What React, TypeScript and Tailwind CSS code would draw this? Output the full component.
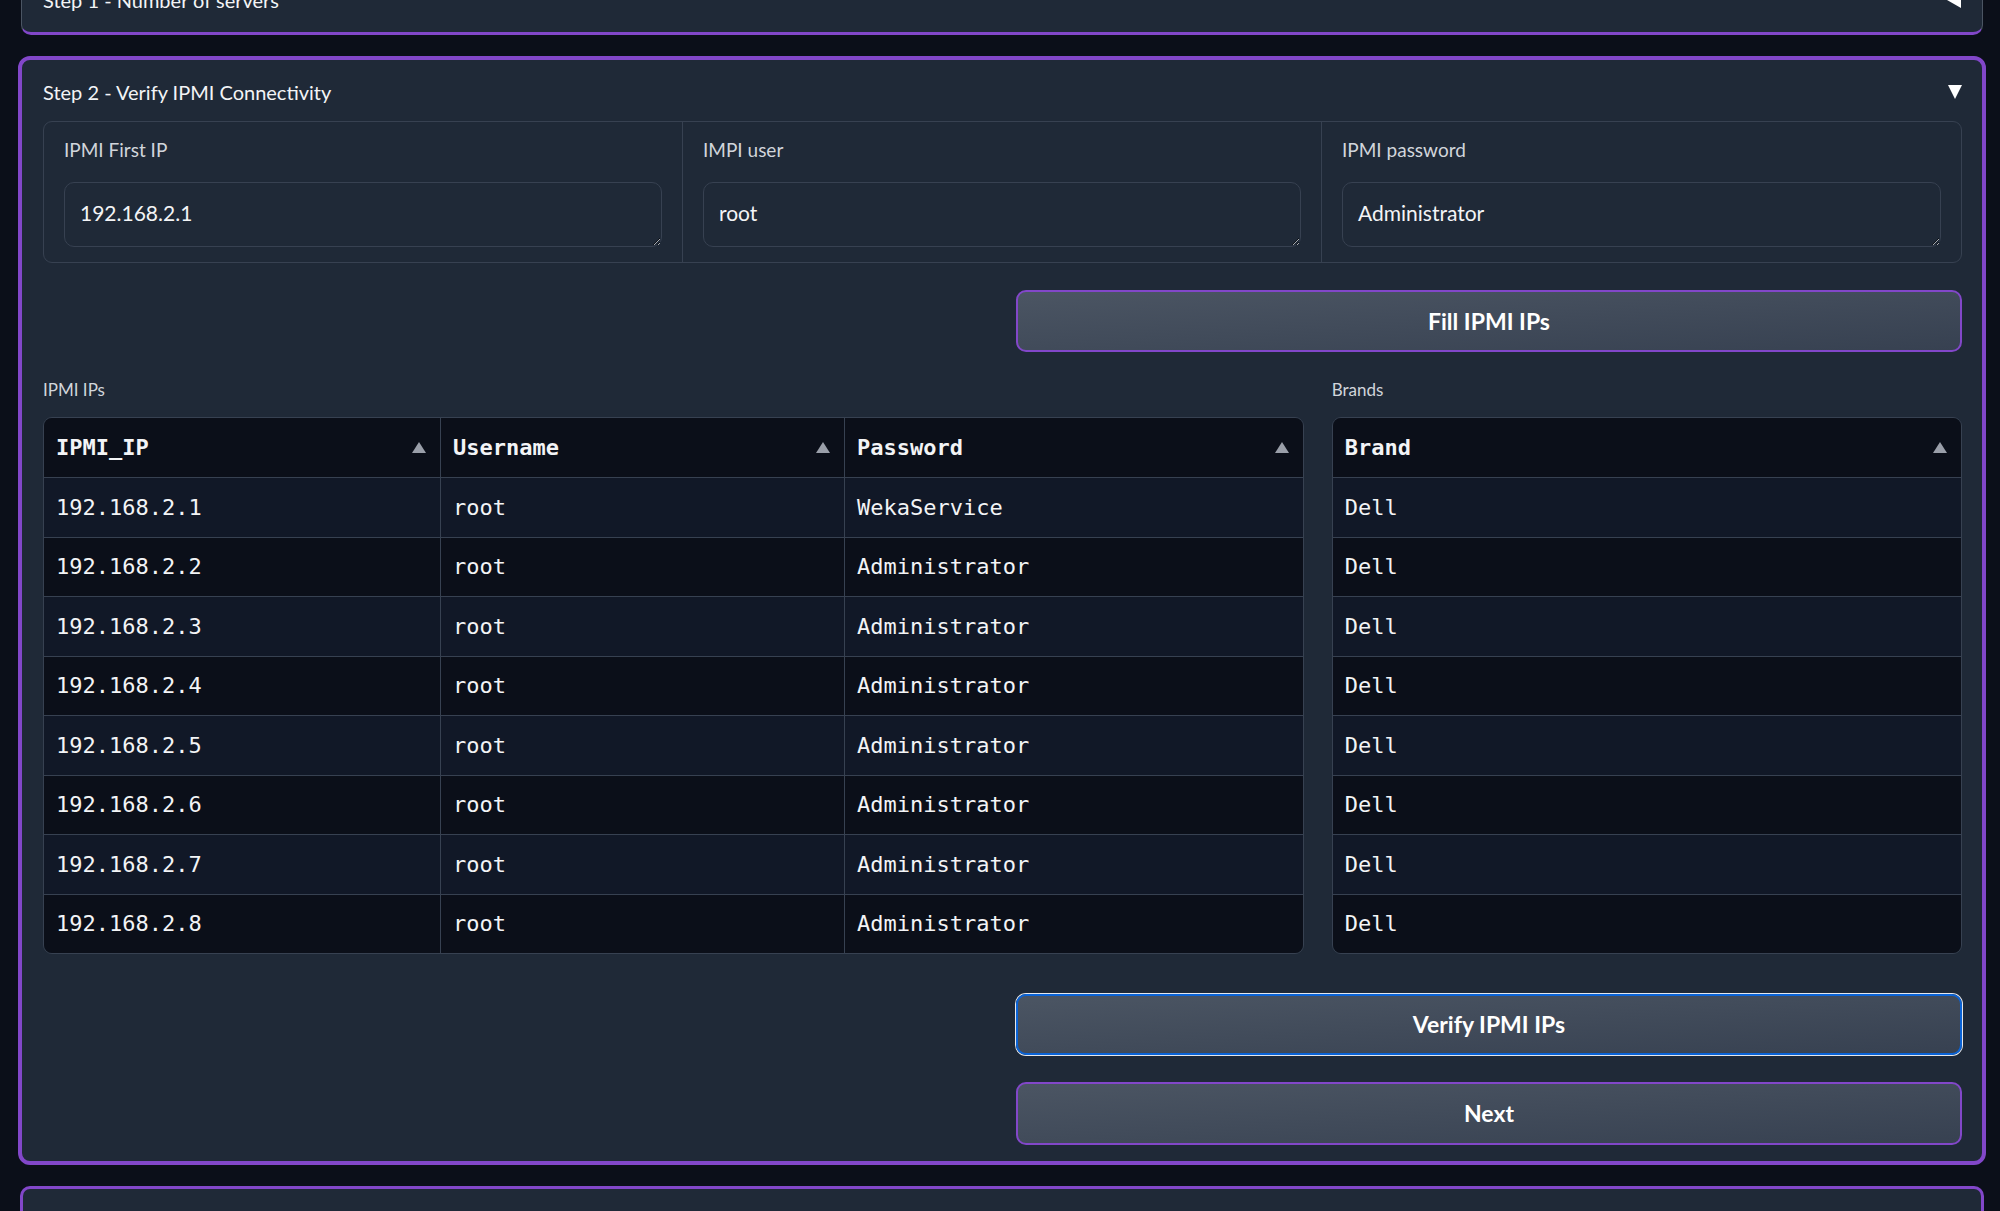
const ipRows = [
  ["192.168.2.1", "root", "WekaService"],
  ["192.168.2.2", "root", "Administrator"],
  ["192.168.2.3", "root", "Administrator"],
  ["192.168.2.4", "root", "Administrator"],
  ["192.168.2.5", "root", "Administrator"],
  ["192.168.2.6", "root", "Administrator"],
  ["192.168.2.7", "root", "Administrator"],
  ["192.168.2.8", "root", "Administrator"],
];

const fields = [
  { label: "IPMI First IP", value: "192.168.2.1" },
  { label: "IMPI user", value: "root" },
  { label: "IPMI password", value: "Administrator" },
];

const SortArrow = () => (
  <svg width="14" height="11" viewBox="0 0 14 11" className="shrink-0">
    <polygon points="7,0 14,11 0,11" fill="#9a9fa9" />
  </svg>
);

const HeaderCell = ({ title, last }: { title: string; last?: boolean }) => (
  <div
    className={`flex h-[59px] items-center justify-between pl-[12px] pr-[14px] font-bold ${
      last ? "" : "border-r border-[#374151]"
    }`}
  >
    <span>{title}</span>
    <SortArrow />
  </div>
);

const Cell = ({ text, last }: { text: string; last?: boolean }) => (
  <div className={`flex h-[58.5px] items-center px-[12px] ${last ? "" : "border-r border-[#374151]"}`}>{text}</div>
);

const btn =
  "flex w-full items-center justify-center rounded-[10px] bg-gradient-to-br from-[#4b5563] to-[#374151] text-[23px] font-bold text-white";

export default function App() {
  return (
    <div className="h-[1211px] overflow-hidden bg-[#0b0f19] pl-[18px] pr-[14px] font-['Lato',sans-serif] text-[#e5e7eb]">
      {/* Step 1 - collapsed */}
      <div className="mx-[3px] -mt-[35px] h-[70px] rounded-[10px] border-x border-b-[3px] border-[#4b5563] border-b-[#8247c9] bg-[#1f2937] px-[21px] pt-[20px]">
        <div className="flex h-[30px] items-center justify-between">
          <span className="text-[20px] text-[#f3f4f6]">Step 1 - Number of servers</span>
          <svg width="14" height="16" viewBox="0 0 14 16">
            <polygon points="0,8 14,0 14,16" fill="#ffffff" />
          </svg>
        </div>
      </div>

      {/* Step 2 - open */}
      <div className="mt-[21px] rounded-[12px] border-4 border-[#8247c9] bg-[#1f2937] pb-[16px] pl-[21px] pr-[20px] pt-[17px]">
        <div className="flex h-[30px] items-center justify-between">
          <span className="text-[20px] text-[#f3f4f6]">Step 2 - Verify IPMI Connectivity</span>
          <svg width="14" height="14" viewBox="0 0 14 14">
            <polygon points="0,0 14,0 7,14" fill="#ffffff" />
          </svg>
        </div>

        {/* inputs */}
        <div className="mt-[14px] grid grid-cols-3 divide-x divide-[#374151] rounded-[9px] border border-[#374151]">
          {fields.map((f) => (
            <div key={f.label} className="px-[20px] pb-[15px] pt-[17px]">
              <div className="h-[22px] text-[19px] leading-[22px] text-[#d1d5db]">{f.label}</div>
              <textarea
                readOnly
                value={f.value}
                rows={1}
                className="mt-[21px] block h-[65px] w-full rounded-[10px] border border-[#374151] bg-[#1f2937] px-[15px] pt-[16px] text-[21px] leading-[28px] text-[#f3f4f6] outline-none scheme-dark"
              />
            </div>
          ))}
        </div>

        {/* fill button */}
        <div className="mt-[27px] grid grid-cols-2 gap-[27px]">
          <div />
          <button className={`${btn} h-[62px] border-2 border-[#8247c9]`}>Fill IPMI IPs</button>
        </div>

        {/* tables */}
        <div className="mt-[26px] grid grid-cols-[2fr_1fr] gap-[28px]">
          <div>
            <div className="mb-[15px] h-[24px] text-[17px] leading-[24px] text-[#d1d5db]">IPMI IPs</div>
            <div className="overflow-hidden rounded-[9px] border border-[#374151] font-['DejaVu_Sans_Mono',monospace] text-[22px] text-[#f3f4f6]">
              <div className="grid grid-cols-[397px_404px_1fr] bg-[#0b0f19]">
                <HeaderCell title="IPMI_IP" />
                <HeaderCell title="Username" />
                <HeaderCell title="Password" last />
              </div>
              {ipRows.map((r, i) => (
                <div
                  key={r[0]}
                  className={`grid grid-cols-[397px_404px_1fr] border-t border-[#374151] ${
                    i % 2 === 0 ? "bg-[#111827]" : "bg-[#0b0f19]"
                  }`}
                >
                  <Cell text={r[0]} />
                  <Cell text={r[1]} />
                  <Cell text={r[2]} last />
                </div>
              ))}
            </div>
          </div>
          <div>
            <div className="mb-[15px] h-[24px] text-[17px] leading-[24px] text-[#d1d5db]">Brands</div>
            <div className="overflow-hidden rounded-[9px] border border-[#374151] font-['DejaVu_Sans_Mono',monospace] text-[22px] text-[#f3f4f6]">
              <div className="bg-[#0b0f19]">
                <HeaderCell title="Brand" last />
              </div>
              {ipRows.map((r, i) => (
                <div
                  key={r[0]}
                  className={`border-t border-[#374151] ${i % 2 === 0 ? "bg-[#111827]" : "bg-[#0b0f19]"}`}
                >
                  <Cell text="Dell" last />
                </div>
              ))}
            </div>
          </div>
        </div>

        {/* action buttons */}
        <div className="mt-[40px] grid grid-cols-2 gap-[27px]">
          <div />
          <button className={`${btn} h-[61px] border-[2.5px] border-[#0a63d6] shadow-[0_0_0_1px_#e5e7eb]`}>
            Verify IPMI IPs
          </button>
        </div>
        <div className="mt-[27px] grid grid-cols-2 gap-[27px]">
          <div />
          <button className={`${btn} h-[63px] border-2 border-[#8247c9]`}>Next</button>
        </div>
      </div>

      {/* Step 3 - collapsed */}
      <div className="mx-[2px] mt-[21px] h-[200px] rounded-[10px] border-x-[3px] border-t-[3px] border-[#8247c9] bg-[#1f2937]" />
    </div>
  );
}
